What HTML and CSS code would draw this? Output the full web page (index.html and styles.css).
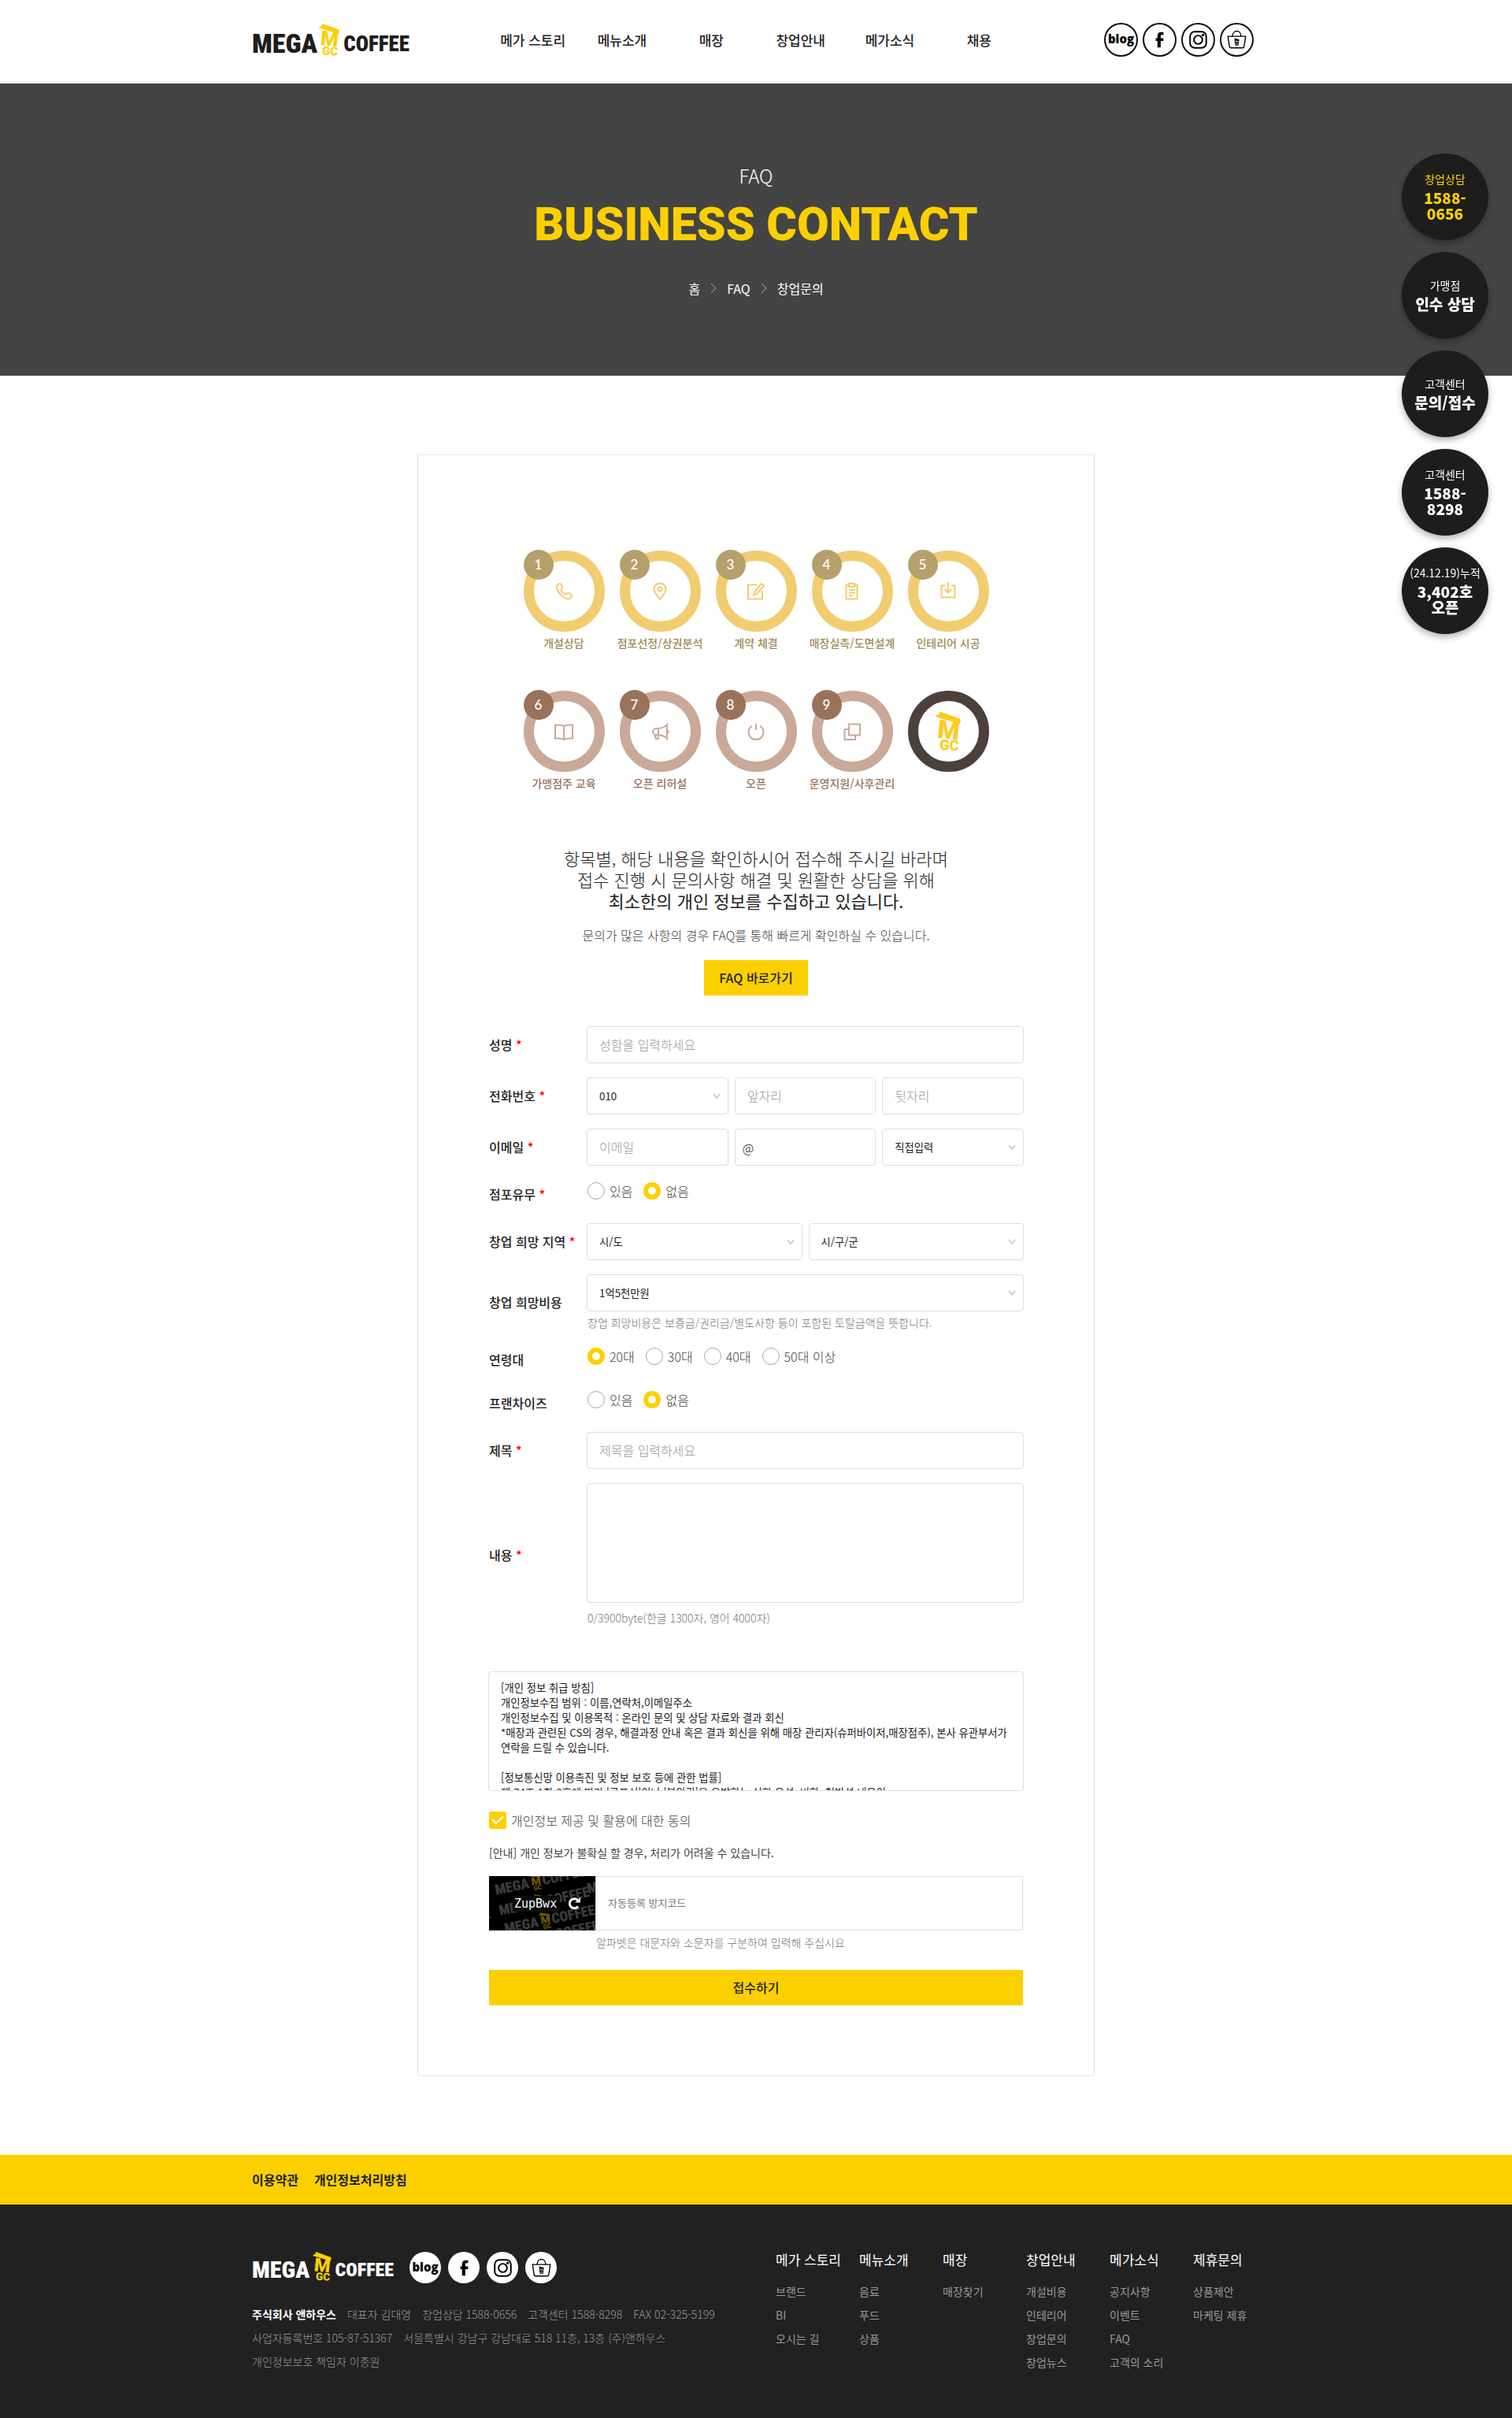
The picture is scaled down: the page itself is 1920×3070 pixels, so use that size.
FILE: index.html
```html
<!DOCTYPE html>
<html lang="ko">
<head>
<meta charset="utf-8">
<meta name="viewport" content="width=device-width, initial-scale=1">
<title>창업문의 | MEGA MGC COFFEE</title>
<link rel="stylesheet" href="styles.css">
</head>
<body>
<svg class="sprite" aria-hidden="true">
  <symbol id="cup" viewBox="0 0 26 41">
    <path d="M4 0 25 7.500 26 9 25 13 0 5.500 1 3.500 3.500 3.500z"/>
    <text class="cup-m" x="2" y="28" transform="rotate(6 12 20)">M</text>
    <text class="cup-gc" x="4" y="40" transform="rotate(3 12 36)">GC</text>
  </symbol>
  <symbol id="facebook" viewBox="0 0 44 44">
    <path d="M27 12v3.500h-2c-1.300 0-1.600.8-1.600 1.800V20H27v3.500h-3.600V32h-4.200v-8.500H17V20h2.200v-3.200c0-3 1.800-4.800 4.800-4.800z"/>
  </symbol>
  <symbol id="instagram" viewBox="0 0 44 44">
    <rect class="line" x="11.500" y="11.500" width="21" height="21" rx="6"/>
    <circle class="line" cx="22" cy="22" r="5.500"/>
    <circle cx="28.300" cy="15.700" r="1.700"/>
  </symbol>
  <symbol id="bag" viewBox="0 0 44 44">
    <path class="thin" d="M10.500 17.500h23l-2 13.500a2 2 0 0 1-2 1.500h-15a2 2 0 0 1-2-1.500zM16.500 17.500c0-9 11-9 11 0"/>
    <path d="M19 20l6 1.600v1.400l-.8 6.500h-4l-1-6.500z"/>
    <path class="cut" d="M20.500 23l1 2 1.500-1.500.8 2M21 27.500h2.500"/>
  </symbol>
</svg>

<header class="header">
  <div class="wrap header-in">
    <a class="logo" href="#" aria-label="MEGA MGC COFFEE">
      <span class="mega">MEGA</span><svg class="logo-cup"><use href="#cup"/></svg><span class="coffee">COFFEE</span>
    </a>
    <nav class="gnb">
      <a href="#">메가 스토리</a><a href="#">메뉴소개</a><a href="#">매장</a><a href="#">창업안내</a><a href="#">메가소식</a><a href="#">채용</a>
    </nav>
    <div class="sns">
      <a href="#" class="blog">blog</a>
      <a href="#" aria-label="facebook"><svg><use href="#facebook"/></svg></a>
      <a href="#" aria-label="instagram"><svg><use href="#instagram"/></svg></a>
      <a href="#" aria-label="shop"><svg><use href="#bag"/></svg></a>
    </div>
  </div>
</header>

<section class="hero">
  <p class="hero-sub">FAQ</p>
  <h1>BUSINESS CONTACT</h1>
  <nav class="crumbs">
    <a href="#">홈</a>
    <svg viewBox="0 0 8 14"><path d="M1 1l6 6-6 6"/></svg>
    <a href="#">FAQ</a>
    <svg viewBox="0 0 8 14"><path d="M1 1l6 6-6 6"/></svg>
    <a href="#">창업문의</a>
  </nav>
</section>

<aside class="quick">
  <a href="#" class="on"><span>창업상담</span><strong>1588-<br>0656</strong></a>
  <a href="#"><span>가맹점</span><strong>인수 상담</strong></a>
  <a href="#"><span>고객센터</span><strong>문의/접수</strong></a>
  <a href="#"><span>고객센터</span><strong>1588-<br>8298</strong></a>
  <a href="#"><span>(24.12.19)누적</span><strong>3,402호<br>오픈</strong></a>
</aside>

<main class="card">
  <ol class="steps">
    <li><div class="ring"><b>1</b><svg viewBox="0 0 24 24"><path d="M7 2c-2 0-4.500 2.500-4 5C4 13 11 20.500 17 21.500c2.500.5 5-2 5-4 0-1.500-3.500-3.500-5-3.500s-1.500 2-3 1.500C12 15 9 12 8.500 10.500 8 9 10 8.500 10 7S8.500 2 7 2z"/></svg></div>개설상담</li>
    <li><div class="ring"><b>2</b><svg viewBox="0 0 24 24"><path d="M12 22C8 16 4.500 13 4.500 9a7.500 7.500 0 0 1 15 0c0 4-3.500 7-7.500 13z"/><circle cx="12" cy="9" r="2.500"/></svg></div>점포선정/상권분석</li>
    <li><div class="ring"><b>3</b><svg viewBox="0 0 24 24"><path d="M13 3.500H2v18h18V11M19 2l3 2.500L13 15l-4 1.500 1-4z"/></svg></div>계약 체결</li>
    <li><div class="ring"><b>4</b><svg viewBox="0 0 24 24"><path d="M8 3.500H4.500v18h14v-18H15M8 2h7v4H8zM8 10h8M8 13.500h8M8 17h5"/></svg></div>매장실측/도면설계</li>
    <li><div class="ring"><b>5</b><svg viewBox="0 0 24 24"><path d="M8 4.500H3.500v15h17v-15H16M12 0v13M7.500 9l4.500 4.500L16.500 9"/></svg></div>인테리어 시공</li>
    <li class="brown"><div class="ring"><b>6</b><svg viewBox="0 0 24 24"><path d="M12 5C10 3 5 3.500 1 3.500v17c4 0 9-.5 11 1.500 2-2 7-1.500 11-1.500v-17C19 3.500 14 3 12 5zM12 5v17"/></svg></div>가맹점주 교육</li>
    <li class="brown"><div class="ring"><b>7</b><svg viewBox="0 0 24 24"><path d="M21 3c-3 4-7 5-14 5a4 4 0 0 0 0 8c7 0 11 1 14 5zM10 8v8M5 16l2 5h3l-1-5M21 10.500c2 0 2 3 0 3"/></svg></div>오픈 리허설</li>
    <li class="brown"><div class="ring"><b>8</b><svg viewBox="0 0 24 24"><path d="M12 2v8M7 4.500a9.500 9.500 0 1 0 10 0"/></svg></div>오픈</li>
    <li class="brown"><div class="ring"><b>9</b><svg viewBox="0 0 24 24"><path d="M8 2.500h14v14H8zM8 9H2.500v13H16v-5.500"/></svg></div>운영지원/사후관리</li>
    <li class="last"><div class="ring"><svg class="ring-cup"><use href="#cup"/></svg></div></li>
  </ol>

  <p class="lead">항목별, 해당 내용을 확인하시어 접수해 주시길 바라며<br>접수 진행 시 문의사항 해결 및 원활한 상담을 위해<br><strong>최소한의 개인 정보를 수집하고 있습니다.</strong></p>
  <p class="lead-sub">문의가 많은 사항의 경우 FAQ를 통해 빠르게 확인하실 수 있습니다.</p>
  <a class="faq-btn" href="#">FAQ 바로가기</a>

  <form>
    <div class="row">
      <label class="name" for="name">성명 <i>*</i></label>
      <div class="field"><input id="name" type="text" placeholder="성함을 입력하세요"></div>
    </div>
    <div class="row">
      <label class="name" for="tel1">전화번호 <i>*</i></label>
      <div class="field cols">
        <select id="tel1"><option>010</option></select>
        <input type="text" placeholder="앞자리" aria-label="앞자리">
        <input type="text" placeholder="뒷자리" aria-label="뒷자리">
      </div>
    </div>
    <div class="row">
      <label class="name" for="mail">이메일 <i>*</i></label>
      <div class="field cols">
        <input id="mail" type="text" placeholder="이메일">
        <div class="at"><span>@</span><input type="text" aria-label="이메일 도메인"></div>
        <select aria-label="도메인 선택"><option>직접입력</option></select>
      </div>
    </div>
    <div class="row" role="radiogroup" aria-labelledby="l-store">
      <span class="name" id="l-store">점포유무 <i>*</i></span>
      <div class="field radios">
        <label><input type="radio" name="store">있음</label>
        <label><input type="radio" name="store" checked>없음</label>
      </div>
    </div>
    <div class="row">
      <label class="name" for="area">창업 희망 지역 <i>*</i></label>
      <div class="field cols">
        <select id="area"><option>시/도</option></select>
        <select aria-label="시/구/군"><option>시/구/군</option></select>
      </div>
    </div>
    <div class="row">
      <label class="name" for="cost">창업 희망비용</label>
      <div class="field">
        <select id="cost"><option>1억5천만원</option></select>
        <p class="help">창업 희망비용은 보증금/권리금/별도사항 등이 포함된 토탈금액을 뜻합니다.</p>
      </div>
    </div>
    <div class="row" role="radiogroup" aria-labelledby="l-age">
      <span class="name" id="l-age">연령대</span>
      <div class="field radios">
        <label><input type="radio" name="age" checked>20대</label>
        <label><input type="radio" name="age">30대</label>
        <label><input type="radio" name="age">40대</label>
        <label><input type="radio" name="age">50대 이상</label>
      </div>
    </div>
    <div class="row" role="radiogroup" aria-labelledby="l-fran">
      <span class="name" id="l-fran">프랜차이즈</span>
      <div class="field radios">
        <label><input type="radio" name="fran">있음</label>
        <label><input type="radio" name="fran" checked>없음</label>
      </div>
    </div>
    <div class="row">
      <label class="name" for="subject">제목 <i>*</i></label>
      <div class="field"><input id="subject" type="text" placeholder="제목을 입력하세요"></div>
    </div>
    <div class="row">
      <label class="name" for="body">내용 <i>*</i></label>
      <div class="field">
        <textarea id="body"></textarea>
        <p class="help count">0/3900byte(한글 1300자, 영어 4000자)</p>
      </div>
    </div>

    <textarea class="policy" readonly aria-label="개인 정보 취급 방침">[개인 정보 취급 방침]
개인정보수집 범위 : 이름,연락처,이메일주소
개인정보수집 및 이용목적 : 온라인 문의 및 상담 자료와 결과 회신
*매장과 관련된 CS의 경우, 해결과정 안내 혹은 결과 회신을 위해 매장 관리자(슈퍼바이저,매장점주), 본사 유관부서가 연락을 드릴 수 있습니다.

[정보통신망 이용촉진 및 정보 보호 등에 관한 법률]
제 74조 1항 3호에 따라 '공포심'이나 '불안감'을 유발하는 심한 욕설, 비하, 협박성 내용이</textarea>

    <label class="agree"><input type="checkbox" checked>개인정보 제공 및 활용에 대한 동의</label>
    <p class="notice">[안내] 개인 정보가 불확실 할 경우, 처리가 어려울 수 있습니다.</p>

    <div class="captcha">
      <div class="captcha-img">
        <svg class="captcha-bg" viewBox="0 0 135 69" aria-hidden="true">
          <g transform="translate(9 24) rotate(-12)"><text>MEGA</text><use class="dim" href="#cup" x="46" y="-17" width="14" height="22"/><text x="61">COFFEE</text></g>
          <g transform="translate(14 50) rotate(-12)"><text>MEGA</text><use class="dim" href="#cup" x="46" y="-17" width="14" height="22"/><text x="61">COFFEE</text></g>
          <g transform="translate(21 73) rotate(-12)"><text>MEGA</text><use class="dim" href="#cup" x="46" y="-17" width="14" height="22"/><text x="61">COFFEE</text></g>
          <g transform="translate(126 22) rotate(-12)"><text>M</text></g>
          <g transform="translate(-6 55) rotate(-12)"><text>E</text></g>
          <g transform="translate(86 80) rotate(-12)"><text>COFFEE</text></g>
        </svg>
        <span class="code">ZupBwx</span>
        <button type="button" aria-label="새로고침"><svg viewBox="0 0 16 16"><path d="M13 11.500a6 6 0 1 1-.5-8"/><path class="head" d="M9 6.500h7V0z"/></svg></button>
      </div>
      <input type="text" placeholder="자동등록 방지코드" aria-label="자동등록 방지코드">
    </div>
    <p class="help captcha-help">알파벳은 대문자와 소문자를 구분하여 입력해 주십시요</p>
    <button class="submit" type="submit">접수하기</button>
  </form>
</main>

<footer>
  <div class="policy-bar"><div class="wrap"><a href="#">이용약관</a><a href="#">개인정보처리방침</a></div></div>
  <div class="foot">
    <div class="wrap foot-in">
      <div class="company">
        <div class="foot-top">
          <a class="logo small" href="#" aria-label="MEGA MGC COFFEE">
            <span class="mega">MEGA</span><svg class="logo-cup"><use href="#cup"/></svg><span class="coffee">COFFEE</span>
          </a>
          <div class="sns fill">
            <a href="#" class="blog">blog</a>
            <a href="#" aria-label="facebook"><svg><use href="#facebook"/></svg></a>
            <a href="#" aria-label="instagram"><svg><use href="#instagram"/></svg></a>
            <a href="#" aria-label="shop"><svg><use href="#bag"/></svg></a>
          </div>
        </div>
        <p><strong>주식회사 앤하우스</strong><span>대표자 김대영</span><span>창업상담 1588-0656</span><span>고객센터 1588-8298</span><span>FAX 02-325-5199</span></p>
        <p><span>사업자등록번호 105-87-51367</span><span>서울특별시 강남구 강남대로 518 11층, 13층 (주)앤하우스</span></p>
        <p>개인정보보호 책임자 이종원</p>
      </div>
      <nav class="sitemap">
        <div><a class="head" href="#">메가 스토리</a><a href="#">브랜드</a><a href="#">BI</a><a href="#">오시는 길</a></div>
        <div><a class="head" href="#">메뉴소개</a><a href="#">음료</a><a href="#">푸드</a><a href="#">상품</a></div>
        <div><a class="head" href="#">매장</a><a href="#">매장찾기</a></div>
        <div><a class="head" href="#">창업안내</a><a href="#">개설비용</a><a href="#">인테리어</a><a href="#">창업문의</a><a href="#">창업뉴스</a></div>
        <div><a class="head" href="#">메가소식</a><a href="#">공지사항</a><a href="#">이벤트</a><a href="#">FAQ</a><a href="#">고객의 소리</a></div>
        <div><a class="head" href="#">제휴문의</a><a href="#">상품제안</a><a href="#">마케팅 제휴</a></div>
      </nav>
    </div>
  </div>
</footer>
</body>
</html>
```
FILE: styles.css
```css
* { box-sizing: border-box; }
body, p, h1, ol { margin: 0; padding: 0; }
body {
  font-family: "Noto Sans CJK KR", "Noto Sans", sans-serif;
  font-size: 16px;
  font-weight: 300;
  line-height: 20px;
  color: #222;
  background: #fff;
}
a { color: inherit; text-decoration: none; }
ol { list-style: none; }
i { font-style: normal; }
svg { display: block; overflow: visible; }
.sprite { position: absolute; width: 0; height: 0; }
.wrap { max-width: 1280px; margin: 0 auto; }

/* brand mark */
.logo { display: flex; align-items: flex-end; width: 200px; height: 41px; color: #1d1d1b; }
.logo span { font-family: "Liberation Sans Narrow", "Roboto Condensed", Roboto, sans-serif; font-weight: 900; }
.mega { width: 86px; font-size: 34px; line-height: 32px; }
.coffee { margin-left: 5px; font-size: 27px; line-height: 29px; }
.logo-cup { width: 26px; height: 41px; fill: #fcd000; }
.cup-m { font: 900 26px Roboto, sans-serif; }
.cup-gc { font: 900 15px Roboto, sans-serif; }

.logo.small { width: 180px; height: 37px; color: #fff; }
.small .mega { width: 77px; font-size: 30px; line-height: 29px; }
.small .coffee { font-size: 24px; line-height: 27px; }
.small .logo-cup { width: 24px; height: 37px; }

/* header */
.header { height: 106px; border-bottom: 3px solid #f3f3f3; }
.header-in { display: flex; height: 100px; align-items: center; }
.gnb { display: grid; grid-template-columns: repeat(6, 1fr); width: 680px; margin-left: 100px; text-align: center; font-size: 17px; font-weight: 500; padding-top: 2px; }
.sns { display: flex; gap: 6px; margin-left: auto; margin-right: 8px; }
.sns a { display: flex; align-items: center; justify-content: center; width: 43px; height: 43px; border: 2px solid #111; border-radius: 50%; color: #000; background: #fff; }
.sns svg { flex: none; width: 43px; height: 43px; }
.sns .blog { font-family: "Open Sans", sans-serif; font-size: 15px; font-weight: 800; padding-bottom: 3px; }
.line { fill: none; stroke: #000; stroke-width: 2; }
.thin { fill: none; stroke: #000; stroke-width: 1.4; }
.cut { fill: none; stroke: #fff; stroke-width: 1; }
.sns.fill { gap: 9px; margin: 0 0 0 20px; }
.sns.fill a { width: 40px; height: 40px; border: 0; }

/* hero */
.hero { height: 371px; padding-top: 101px; background: #444; color: #fff; text-align: center; }
.hero-sub { font-size: 24px; line-height: 32px; }
h1 { margin-top: 11px; color: #fcd000; font-family: Roboto, sans-serif; font-size: 59px; font-weight: 900; line-height: 70px; }
.crumbs { display: flex; justify-content: center; align-items: center; gap: 13px; margin-top: 36px; font-weight: 400; }
.crumbs svg { width: 8px; height: 14px; fill: none; stroke: #aaa; }

/* floating quick links */
.quick { position: fixed; top: 195px; right: 30px; display: grid; gap: 15px; }
.quick a { display: flex; flex-direction: column; align-items: center; justify-content: center; gap: 4px; width: 110px; height: 110px; padding-bottom: 2px; border-radius: 50%; background: #1d1d1b; color: #fff; box-shadow: 0 4px 8px rgba(0, 0, 0, .3); text-align: center; white-space: nowrap; }
.quick span { font-size: 14px; font-weight: 400; }
.quick strong { font-size: 19px; font-weight: 900; line-height: 20px; }
.quick .on { color: #fcd000; }

/* contact card */
.card { max-width: 860px; margin: 100px auto; padding: 121px 89px 89px; border: 1px solid #e5e5e5; }
.steps { display: grid; grid-template-columns: repeat(5, 122px); justify-content: center; row-gap: 51px; text-align: center; font-size: 14px; font-weight: 500; color: #a08b58; white-space: nowrap; }
.ring { position: relative; display: flex; align-items: center; justify-content: center; width: 103px; height: 103px; margin: 0 auto 4px; border: 13px solid #f2cc70; border-radius: 50%; color: #f2cc70; }
.ring svg { width: 24px; height: 24px; fill: none; stroke: currentColor; stroke-width: 2; }
.ring b { position: absolute; top: -14px; left: -13px; width: 38px; height: 38px; border-radius: 50%; background: #b5a06c; color: #fff; font-family: Lato, sans-serif; font-size: 17px; font-weight: 500; line-height: 38px; }
.brown { color: #99725c; }
.brown .ring { border-color: #c9a998; color: #c9a998; }
.brown b { background: #99725c; }
.last .ring { border-color: #4b403a; }
.ring .ring-cup { width: 32px; height: 51px; fill: #fccc1e; stroke: none; }

.lead { margin-top: 72px; text-align: center; font-size: 22px; line-height: 27px; }
.lead strong { font-weight: 400; }
.lead-sub { margin-top: 20px; text-align: center; color: #444; }
.faq-btn { display: block; width: 132px; margin: 22px auto 30px; background: #fcd000; font-weight: 500; line-height: 45px; text-align: center; }

/* form */
.row { display: grid; grid-template-columns: 125px 1fr; align-items: center; padding: 9px 0; }
.name { padding: 0 0 2px 1px; font-weight: 500; }
.name i { color: #f00; }
input, select, textarea { font-family: inherit; color: #222; }
input[type="text"], select, textarea { display: block; width: 100%; height: 47px; padding: 0 15px; border: 1px solid #ddd; border-radius: 4px; background: #fff; outline: 0; }
input[type="text"] { padding-bottom: 2px; font-size: 16px; font-weight: 300; }
::placeholder { color: #999; opacity: 1; }
select { appearance: none; font-weight: 400; background: #fff url("data:image/svg+xml,%3Csvg xmlns='http://www.w3.org/2000/svg' width='10' height='8'%3E%3Cpath d='M1 1l4 5 4-5' fill='none' stroke='%23ccc' stroke-width='2'/%3E%3C/svg%3E") no-repeat right 9px center; }
.cols { display: grid; grid-auto-flow: column; grid-auto-columns: 1fr; gap: 8px; }
.at { display: grid; align-items: center; }
.at > * { grid-area: 1 / 1; }
.at span { z-index: 1; padding-left: 10px; pointer-events: none; }
.at input[type="text"] { padding-left: 30px; }
.radios { display: flex; gap: 14px; padding: 3px 0 12px 1px; }
.radios label, .agree { display: flex; align-items: center; gap: 6px; height: 22px; color: #444; }
input[type="radio"], input[type="checkbox"] { appearance: none; flex: none; width: 22px; height: 22px; margin: 0; border: 1px solid #aaa; background: #fff; }
input[type="radio"] { border-radius: 50%; }
input[type="radio"]:checked { border: 6px solid #fcd000; }
.help { margin-top: 4px; padding-left: 1px; font-size: 14px; line-height: 21px; color: #777; }
.count { margin-top: 7px; line-height: 24px; }
textarea { height: 152px; resize: none; }
textarea.policy { margin-top: 47px; padding: 10px 15px; overflow: hidden; font-weight: 400; line-height: 19px; }
.agree { margin: 26px 1px 20px; }
.agree input { border: 0; border-radius: 3px; background: #fcd000 url("data:image/svg+xml,%3Csvg xmlns='http://www.w3.org/2000/svg' width='16' height='12'%3E%3Cpath d='M1 5l5 5 9-9' fill='none' stroke='%23fff' stroke-width='2'/%3E%3C/svg%3E") no-repeat center; }
.notice { padding-left: 1px; font-size: 14px; font-weight: 400; color: #444; }
.captcha { display: flex; margin: 20px 1px 0; }
.captcha-img { position: relative; display: flex; align-items: center; flex: none; width: 135px; height: 69px; overflow: hidden; background: #000; }
.captcha-bg { position: absolute; inset: 0; width: 135px; height: 69px; font: 900 18px "Liberation Sans Narrow", "Roboto Condensed", Roboto, sans-serif; fill: #3c3c3c; }
.dim { fill: #6b5900; }
.code { position: relative; margin-left: 30px; padding: 0 4px 0 2px; background: #0a0a0a; color: #fff; font: 15px "DejaVu Sans Mono", monospace; line-height: 20px; }
.captcha button { position: relative; margin-left: 10px; padding: 0; border: 0; background: none; }
.captcha button svg { width: 16px; height: 16px; fill: none; stroke: #fff; stroke-width: 3; }
.captcha .head { fill: #fff; stroke: none; }
.captcha input[type="text"] { height: 69px; border-radius: 0; font-size: 13px; font-weight: 400; }
.captcha ::placeholder { color: #777; }
.captcha-help { margin: 5px 0 0 136px; }
.submit { display: block; width: 678px; max-width: 100%; height: 45px; margin: 24px auto 0; padding: 0 0 2px; border: 0; background: #fcd000; color: #222; font: inherit; font-weight: 500; }

/* footer */
.policy-bar { background: #fcd000; font-weight: 700; line-height: 63px; }
.policy-bar .wrap { display: flex; gap: 20px; }
.foot { background: #212121; color: #999; font-size: 14px; padding: 60px 0 56px; }
.foot-in { display: flex; justify-content: space-between; }
.foot-top { display: flex; margin-bottom: 24px; }
.company p { display: flex; gap: 14px; line-height: 30px; white-space: nowrap; }
.company strong { color: #fff; font-weight: 700; }
.sitemap { display: grid; grid-template-columns: repeat(6, 106px); margin-right: -21px; font-weight: 400; }
.sitemap a { display: block; line-height: 30px; white-space: nowrap; }
.sitemap .head { margin-bottom: 15px; color: #fff; font-size: 17px; line-height: 20px; }
```
